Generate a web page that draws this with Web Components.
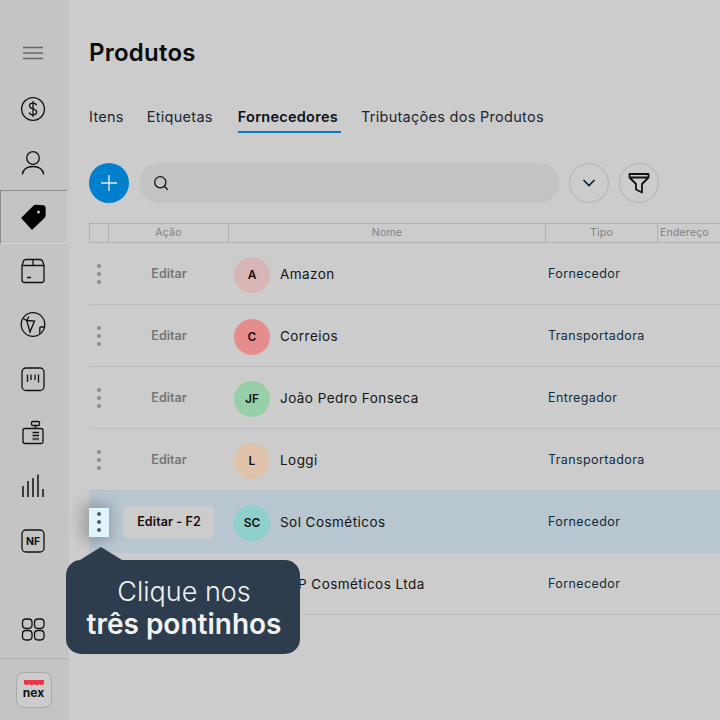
<!DOCTYPE html>
<html lang="pt-BR">
<head>
<meta charset="utf-8">
<title>Produtos</title>
<style>
  html, body { margin: 0; height: 100%; overflow: hidden; }
  body { display: flex; width: 720px; height: 720px; overflow: hidden; background: #ccc; font-family: Inter, "Liberation Sans", sans-serif; color: #111; }
</style>
</head>
<body>
<nx-sidebar>
  <nx-nav-item icon="menu"></nx-nav-item>
  <nx-nav-item icon="money"></nx-nav-item>
  <nx-nav-item icon="user"></nx-nav-item>
  <nx-nav-item icon="tag" active></nx-nav-item>
  <nx-nav-item icon="box"></nx-nav-item>
  <nx-nav-item icon="globe"></nx-nav-item>
  <nx-nav-item icon="barcode"></nx-nav-item>
  <nx-nav-item icon="register"></nx-nav-item>
  <nx-nav-item icon="bars"></nx-nav-item>
  <nx-nav-item icon="nf"></nx-nav-item>
  <nx-nav-item icon="apps" slot="bottom"></nx-nav-item>
</nx-sidebar>

<nx-main>
  <nx-tabs slot="tabs">
    <span>Itens</span>
    <span>Etiquetas</span>
    <span class="on">Fornecedores</span>
    <span>Tributações dos Produtos</span>
  </nx-tabs>
  <nx-toolbar slot="toolbar"></nx-toolbar>
  <nx-table>
    <nx-row name="Amazon" initials="A" color="#d9b6b6" type="Fornecedor"></nx-row>
    <nx-row name="Correios" initials="C" color="#e58d8d" type="Transportadora"></nx-row>
    <nx-row name="João Pedro Fonseca" initials="JF" color="#97d0a8" type="Entregador"></nx-row>
    <nx-row name="Loggi" initials="L" color="#dfc3aa" type="Transportadora"></nx-row>
    <nx-row name="Sol Cosméticos" initials="SC" color="#8ed0cb" type="Fornecedor" selected></nx-row>
    <!-- esta fila queda tapada por el tooltip, solo se ve el final del nombre -->
    <nx-row name="P Cosméticos Ltda" indent="18" type="Fornecedor" covered></nx-row>
  </nx-table>
  <nx-tooltip slot="overlay">Clique nos<b>três pontinhos</b></nx-tooltip>
</nx-main>

<script>
// icones do menu lateral, todos num viewBox de 34x34 (centro = centro do item)
const ICONS = {
  menu: '<path d="M7 11.5h20M7 17h20M7 22.5h20" stroke="#666" stroke-width="1.6"/>',
  money: '<circle cx="17" cy="17" r="11.4"/><path d="M20.6 13.2c-.5-1.4-1.9-2-3.6-2-2 0-3.5 1-3.5 2.8 0 3.8 7.2 2.1 7.2 6 0 1.8-1.6 2.8-3.7 2.8-1.8 0-3.2-.8-3.7-2.3M17 9v16"/>',
  user: '<circle cx="17" cy="12" r="6.3"/><path d="M6.3 28.5c.8-5 5-8 10.7-8s9.9 3 10.7 8"/>',
  tag: '<path d="M5 18 16.5 6.5Q17.5 5.5 19 5.5L26.5 6Q28 6 28 8L28 15Q28 16.5 27 17.5L15 29Z" fill="#000" stroke="#000" stroke-linejoin="round"/><circle cx="21.5" cy="12" r="1.5" fill="#c4c4c4" stroke="none"/>',
  box: '<path d="M6 11.5 7.5 7Q8 5.5 10 5.5H24Q26 5.5 26.5 7L28 11.5V26Q28 28.5 25.5 28.5H8.5Q6 28.5 6 26Z"/><path d="M6 11.5H28M17 5.5V11.5M11 23.5H15"/>',
  globe: '<circle cx="17" cy="16.5" r="11.8"/><path d="M10.7 12.5 18.5 13 14 24 10.7 12.5ZM7.3 10.5 10.7 12.5 13 8.5M29 19H24.5Q23.8 19 23.8 20V26"/>',
  barcode: '<rect x="6" y="6" width="22" height="22.5" rx="4"/><path d="M11.5 12.5V20M15 12.5V18M19 12.5V18M22.5 12.5V20.5"/>',
  register: '<rect x="15.5" y="5.5" width="8" height="4" rx="1.2"/><path d="M19.5 9.5V13M9 12.5H25Q27 12.5 27 14.5V26Q27 27.5 25 27.5H9Q7 27.5 7 25.5V14.5Q7 12.5 9 12.5ZM16.5 16.5H23M16.5 19.5H23"/><path d="M16.5 23H23" stroke="#555" stroke-width="2.5"/>',
  bars: '<path d="M7 27V16M12 27V11M17 27V8M22 27V4.5M27 27V19" stroke-width="1.5"/>',
  nf: '<rect x="6" y="6" width="22" height="22" rx="4"/>',
  apps: '<rect x="6.5" y="7" width="9.5" height="9.5" rx="3.4"/><rect x="18.5" y="7" width="9.5" height="9.5" rx="3.4"/><rect x="6.5" y="18.5" width="9.5" height="9.5" rx="3.4"/><rect x="18.5" y="18.5" width="9.5" height="9.5" rx="3.4"/>'
};

class NxSidebar extends HTMLElement {
  constructor() {
    super();
    this.attachShadow({ mode: 'open' });
    this.shadowRoot.innerHTML = `
      <style>
        :host { display: flex; flex-direction: column; flex: none; width: 69px; height: 720px; box-sizing: border-box; padding-top: 26px; background: #c4c4c4; }
        .nav { display: flex; flex-direction: column; }
        .nav ::slotted(:first-child) { margin-bottom: 2px; }
        .bottom { margin-top: auto; }
        .logo { display: flex; justify-content: center; align-items: center; height: 62px; box-sizing: border-box; border-top: 1px solid #b0b0b0; margin-top: 2px; margin-right: 1px; padding-right: 1px; }
        .mark { display: flex; flex-direction: column; align-items: center; justify-content: center; box-sizing: border-box; width: 36px; height: 36px; border: 1px solid #a8a8a8; border-radius: 8px; background: #cccccc; }
        svg { display: block; }
        .word { font: 700 12px/12px Inter, sans-serif; color: #111; margin-top: 1px; }
      </style>
      <div class="nav"><slot></slot></div>
      <div class="bottom"><slot name="bottom"></slot></div>
      <div class="logo">
        <div class="mark">
          <svg width="20" height="6" viewBox="0 0 20 6"><path d="M0 0H20V3Q20 5 18 5 16 5 15 4 13.5 6 11.5 5 10 4 10 4 8.5 6 6.5 5 5 4 5 4 3.5 5 2 5 0 5 0 3Z" fill="#ee3344"/></svg>
          <span class="word">nex</span>
        </div>
      </div>
    `;
  }
}

class NxNavItem extends HTMLElement {
  constructor() {
    super();
    this.attachShadow({ mode: 'open' });
  }
  connectedCallback() {
    const name = this.getAttribute('icon');
    this.shadowRoot.innerHTML = `
      <style>
        :host { display: flex; align-items: center; justify-content: center; position: relative; height: 54px; width: 68px; padding-right: 2px; box-sizing: border-box; }
        :host([active]) { border-top: 1px solid #8c8c8c; border-left: 1px solid #8c8c8c; border-bottom: 1px solid #d6d6d6; border-right: 1px solid #d6d6d6; padding-right: 1px; padding-left: 0; }
        svg { display: block; fill: none; stroke: #111; stroke-width: 1.3; }
        span { position: absolute; inset: 0 2px 0 0; display: flex; align-items: center; justify-content: center; font: 700 10.5px Inter, sans-serif; color: #111; }
      </style>
      <svg width="34" height="34" viewBox="0 0 34 34">${ICONS[name]}</svg>
      ${name === 'nf' ? '<span>NF</span>' : ''}
    `;
  }
}

class NxMain extends HTMLElement {
  constructor() {
    super();
    this.attachShadow({ mode: 'open' });
    this.shadowRoot.innerHTML = `
      <style>
        :host { display: block; position: relative; flex: 1; min-width: 0; height: 720px; box-sizing: border-box; padding: 38px 0 0 20px; }
        h1 { margin: 0 0 36px; font: 600 24px/30px Inter, sans-serif; letter-spacing: .25px; color: #0a0a0a; }
      </style>
      <h1>Produtos</h1>
      <slot name="tabs"></slot>
      <slot name="toolbar"></slot>
      <slot></slot>
      <slot name="overlay"></slot>
    `;
  }
}

class NxTabs extends HTMLElement {
  constructor() {
    super();
    this.attachShadow({ mode: 'open' });
    this.shadowRoot.innerHTML = `
      <style>
        :host { display: flex; gap: 23px; height: 29px; margin-bottom: 30px; font: 400 14.5px/26px Inter, sans-serif; letter-spacing: .28px; color: #1c2530; }
        ::slotted(.on) { font-weight: 600; color: #0a0f18; border-bottom: 2px solid #0a7cc6; padding-right: 3px; margin: 0 -3px 0 2px; box-sizing: border-box; height: 29px; letter-spacing: .25px; }
      </style>
      <slot></slot>
    `;
  }
}

class NxToolbar extends HTMLElement {
  constructor() {
    super();
    this.attachShadow({ mode: 'open' });
    this.shadowRoot.innerHTML = `
      <style>
        :host { display: flex; align-items: center; gap: 10px; height: 40px; margin-bottom: 20px; padding-right: 61px; }
        button { flex: none; display: flex; align-items: center; justify-content: center; width: 40px; height: 40px; padding: 0; border-radius: 50%; border: 1px solid #b2b2b2; background: transparent; }
        .add { background: #0080cc; border: 0; }
        .search { flex: 1; display: flex; align-items: center; height: 40px; padding-left: 14px; border-radius: 20px; background: #c3c3c3; }
        svg { display: block; fill: none; }
      </style>
      <button class="add"><svg width="20" height="20" viewBox="0 0 20 20"><path d="M10 2V18M2 10H18" stroke="#e6e6e6" stroke-width="1.4"/></svg></button>
      <div class="search"><svg width="16" height="16" viewBox="0 0 16 16"><circle cx="7.3" cy="7.3" r="5.6" stroke="#111" stroke-width="1.3"/><path d="M11.5 11.5 14.8 14.8" stroke="#111" stroke-width="1.3"/></svg></div>
      <button><svg width="14" height="10" viewBox="0 0 14 10"><path d="M1.5 2 7 7.5 12.5 2" stroke="#08233a" stroke-width="1.7"/></svg></button>
      <button><svg width="22" height="22" viewBox="0 0 22 22"><path d="M1.5 2H20.5V5.5L14 12V20.5L8 17.5V12L1.5 5.5ZM1.5 5.5H20.5" stroke="#111" stroke-width="1.8" stroke-linejoin="round"/></svg></button>
    `;
  }
}

class NxTable extends HTMLElement {
  constructor() {
    super();
    this.attachShadow({ mode: 'open' });
    this.shadowRoot.innerHTML = `
      <style>
        :host { display: block; }
        .head { display: grid; grid-template-columns: 19px 120px 317px 112px 1fr; height: 20px; box-sizing: border-box; border: solid #b0b0b0; border-width: 1px 0 1px 1px; font: 400 10.5px/18px Inter, sans-serif; letter-spacing: .2px; color: #808080; text-align: center; }
        .head span { border-right: 1px solid #b0b0b0; min-width: 0; }
        .head span:last-child { border: 0; text-align: left; padding-left: 2px; white-space: nowrap; }
      </style>
      <div class="head"><span></span><span>Ação</span><span>Nome</span><span>Tipo</span><span>Endereço</span></div>
      <slot></slot>
    `;
  }
}

class NxRow extends HTMLElement {
  constructor() {
    super();
    this.attachShadow({ mode: 'open' });
  }
  connectedCallback() {
    const sel = this.hasAttribute('selected');
    const covered = this.hasAttribute('covered');
    const indent = this.getAttribute('indent') || 0;
    this.shadowRoot.innerHTML = `
      <style>
        :host { display: grid; grid-template-columns: 20px 120px 317px 1fr; align-items: center; height: 62px; box-sizing: border-box; box-shadow: inset 0 -1px #bdbdbd; font: 400 13.5px Inter, sans-serif; letter-spacing: .45px; }
        :host([selected]) { background: #b8c6d0; box-shadow: none; }
        .dots { display: flex; flex-direction: column; align-items: center; justify-content: center; gap: 4px; height: 29px; }
        .dots i { width: 4px; height: 4px; border-radius: 50%; background: #8c8c8c; }
        :host([selected]) .dots { background: #e0f4ff; box-shadow: -3px 0 14px 4px rgba(0,0,0,.22); }
        :host([selected]) .dots i { background: #555c63; }
        .act { display: flex; justify-content: center; margin-bottom: 2px; font-weight: 600; font-size: 12.5px; letter-spacing: 0; color: #757575; }
        :host([selected]) .act { letter-spacing: .1px; margin-bottom: 0; }
        :host([selected]) .act span { display: block; padding: 0 13px; line-height: 32px; background: #cccccc; border-radius: 4px; color: #1a0a0a; width: 64px; text-align: center; white-space: nowrap; }
        .name { display: flex; align-items: center; gap: 10px; padding-left: 5px; white-space: nowrap; color: #141414; }
        .ava { flex: none; width: 36px; height: 36px; margin-top: 1px; border-radius: 50%; display: flex; align-items: center; justify-content: center; font-size: 12px; font-weight: 600; letter-spacing: 0; color: #111; }
        .type { padding-left: 2px; margin-bottom: 2px; font-size: 12.5px; letter-spacing: .4px; color: #0e2c3e; white-space: nowrap; }
      </style>
      <div class="dots">${covered ? '' : '<i></i><i></i><i></i>'}</div>
      <div class="act">${covered ? '' : `<span>${sel ? 'Editar - F2' : 'Editar'}</span>`}</div>
      <div class="name">
        <div class="ava" style="background:${this.getAttribute('color') || 'none'}">${this.getAttribute('initials') || ''}</div>
        <span style="margin-left:${indent}px">${this.getAttribute('name')}</span>
      </div>
      <div class="type">${this.getAttribute('type')}</div>
    `;
  }
}

class NxTooltip extends HTMLElement {
  constructor() {
    super();
    this.attachShadow({ mode: 'open' });
    this.shadowRoot.innerHTML = `
      <style>
        :host { position: absolute; left: -3px; top: 560px; display: flex; flex-direction: column; align-items: center; justify-content: center; box-sizing: border-box; width: 234px; height: 94px; padding: 2px 0 0 2px; border-radius: 15px; background: #2e3d4d; color: #f2f2f2; font: 300 27px/32px Inter, sans-serif; }
        :host::before { content: ""; position: absolute; left: 14px; top: -13px; border-left: 21px solid transparent; border-right: 21px solid transparent; border-bottom: 13px solid #2e3d4d; }
        ::slotted(b) { display: block; font-size: 28px; font-weight: 600; }
      </style>
      <slot></slot>
    `;
  }
}

customElements.define('nx-sidebar', NxSidebar);
customElements.define('nx-nav-item', NxNavItem);
customElements.define('nx-main', NxMain);
customElements.define('nx-tabs', NxTabs);
customElements.define('nx-toolbar', NxToolbar);
customElements.define('nx-table', NxTable);
customElements.define('nx-row', NxRow);
customElements.define('nx-tooltip', NxTooltip);
</script>
</body>
</html>
